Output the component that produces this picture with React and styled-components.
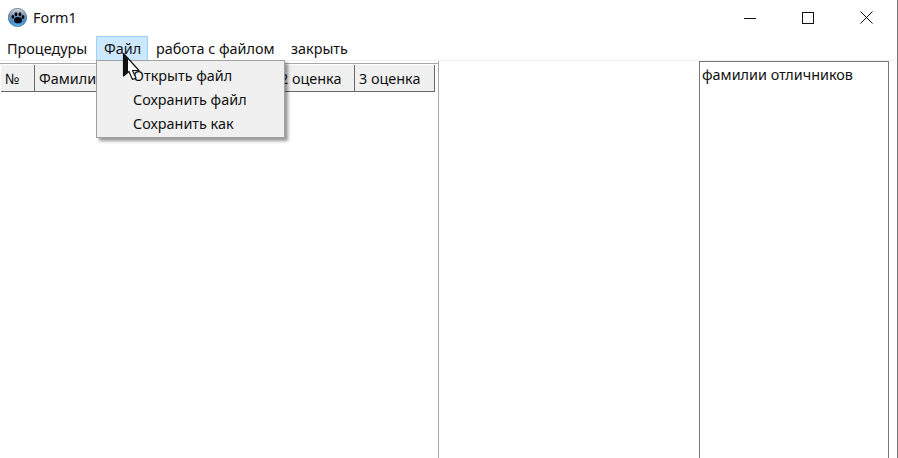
import React from 'react'
import styled, { createGlobalStyle } from 'styled-components'

const GlobalStyle = createGlobalStyle`
  html, body {
    margin: 0;
    padding: 0;
    background: #fff;
    overflow: hidden;
  }
  body {
    font-family: "Noto Sans", "Open Sans", sans-serif;
    font-size: 14.4px;
    color: #111;
  }
`

const Window = styled.div`
  position: relative;
  width: 898px;
  height: 458px;
  box-sizing: border-box;
  border-right: 1px solid #777;
  display: flex;
  flex-direction: column;
  overflow: hidden;
  background: #fff;
`

const TitleBar = styled.div`
  height: 36px;
  box-sizing: border-box;
  flex: none;
  display: flex;
  align-items: center;
  padding: 0 1px 1px 8px;
`

const Title = styled.span`
  margin-left: 6px;
  flex: 1;
  line-height: 19px;
`

const WinButton = styled.div`
  width: 58.5px;
  height: 34px;
  display: flex;
  align-items: center;
  justify-content: center;
`

const MenuBar = styled.div`
  height: 24px;
  flex: none;
  display: flex;
  align-items: stretch;
  border-bottom: 1px solid #f0f0f0;
`

const MenuItem = styled.div`
  box-sizing: border-box;
  padding-left: ${(p) => p.$pad}px;
  width: ${(p) => p.$w}px;
  white-space: nowrap;
  line-height: 23px;
  background: ${(p) => (p.$active ? '#cce8ff' : 'transparent')};
  border: 1px solid ${(p) => (p.$active ? '#99d1ff' : 'transparent')};
  border-bottom: none;
`

const Content = styled.div`
  flex: 1;
  display: flex;
  min-height: 0;
`

const GridPanel = styled.div`
  width: 439px;
  box-sizing: border-box;
  flex: none;
  border-right: 1px solid #a9a9a9;
  padding-top: 2px;
`

const GridFrame = styled.div`
  border-top: 1px solid #a9a9a9;
  padding: 1px 0 0 1px;
`

const HeaderRow = styled.div`
  display: flex;
  height: 27px;
`

const HeaderCell = styled.div`
  box-sizing: border-box;
  width: ${(p) => p.$w}px;
  height: 27px;
  padding-left: 4px;
  background: #f0f0f0;
  border-right: 1px solid #696969;
  border-bottom: 1px solid #696969;
  line-height: 28px;
  white-space: nowrap;
  overflow: hidden;
`

const Middle = styled.div`
  flex: 1;
`

const ListBox = styled.div`
  width: 190px;
  flex: none;
  box-sizing: border-box;
  margin-right: 8px;
  border: 1px solid #777;
  border-bottom: none;
  padding: 3px 2px;
  line-height: 20px;
  white-space: nowrap;
`

const Dropdown = styled.div`
  position: absolute;
  left: 96px;
  top: 60px;
  width: 189px;
  height: 78px;
  box-sizing: border-box;
  background: #f0f0f0;
  border: 1px solid #a0a0a0;
  box-shadow: 3px 3px 3px rgba(0, 0, 0, 0.4);
  padding-top: 3px;
`

const DropdownItem = styled.div`
  height: 24px;
  line-height: 24px;
  padding-left: 36px;
  white-space: nowrap;
`

const Cursor = styled.svg`
  position: absolute;
  left: 122px;
  top: 52px;
`

const AppIcon = () => (
  <svg width="19" height="19" viewBox="0 0 19 19">
    <defs>
      <linearGradient id="globe" x1="0" y1="0" x2="0" y2="1">
        <stop offset="0%" stopColor="#d4d8de" />
        <stop offset="40%" stopColor="#7f97b3" />
        <stop offset="75%" stopColor="#3b8fd6" />
        <stop offset="100%" stopColor="#55bdf2" />
      </linearGradient>
    </defs>
    <circle cx="9.5" cy="9.5" r="9.2" fill="url(#globe)" stroke="#41566e" strokeWidth="0.6" />
    <ellipse cx="10" cy="12.2" rx="4" ry="3.1" fill="#08080c" />
    <ellipse cx="4.9" cy="8.8" rx="1.4" ry="1.9" fill="#08080c" />
    <ellipse cx="8" cy="6.2" rx="1.4" ry="2" fill="#08080c" />
    <ellipse cx="12" cy="6.2" rx="1.4" ry="2" fill="#08080c" />
    <ellipse cx="15" cy="9" rx="1.4" ry="1.9" fill="#08080c" />
  </svg>
)

const columns = [
  { w: 34, text: '№' },
  { w: 100, text: 'Фамилия' },
  { w: 141, text: '' },
  { w: 79, text: '2 оценка' },
  { w: 80, text: '3 оценка' },
]

export default function App() {
  return (
    <>
      <GlobalStyle />
      <Window>
        <TitleBar>
          <AppIcon />
          <Title>Form1</Title>
          <WinButton>
            <svg width="12" height="12" viewBox="0 0 12 12">
              <path d="M0 6.5H12" stroke="#111" fill="none" />
            </svg>
          </WinButton>
          <WinButton>
            <svg width="12" height="12" viewBox="0 0 12 12">
              <rect x="0.5" y="0.5" width="11" height="11" stroke="#111" fill="none" />
            </svg>
          </WinButton>
          <WinButton>
            <svg width="13" height="13" viewBox="0 0 13 13">
              <path d="M0.5 0.5L12.5 12.5M12.5 0.5L0.5 12.5" stroke="#111" fill="none" />
            </svg>
          </WinButton>
        </TitleBar>
        <MenuBar>
          <MenuItem $w={96} $pad={6}>Процедуры</MenuItem>
          <MenuItem $w={52} $pad={7} $active>Файл</MenuItem>
          <MenuItem $w={135} $pad={7}>работа с файлом</MenuItem>
          <MenuItem $w={72} $pad={7}>закрыть</MenuItem>
        </MenuBar>
        <Content>
          <GridPanel>
            <GridFrame>
              <HeaderRow>
                {columns.map((c, i) => (
                  <HeaderCell key={i} $w={c.w}>{c.text}</HeaderCell>
                ))}
              </HeaderRow>
            </GridFrame>
          </GridPanel>
          <Middle />
          <ListBox>фамилии отличников</ListBox>
        </Content>
        <Dropdown>
          <DropdownItem>Открыть файл</DropdownItem>
          <DropdownItem>Сохранить файл</DropdownItem>
          <DropdownItem>Сохранить как</DropdownItem>
        </Dropdown>
        <Cursor width="19" height="30" viewBox="0 0 19 30">
          <path d="M1.5 1.5V24L7 19.5L10.5 27.5L14 26L10.5 18.5H17Z" fill="#fff" stroke="#111" strokeWidth="1.2" strokeLinejoin="round" />
          <path d="M1.5 1.5V24L6 20V7Z" fill="#111" />
        </Cursor>
      </Window>
    </>
  )
}
